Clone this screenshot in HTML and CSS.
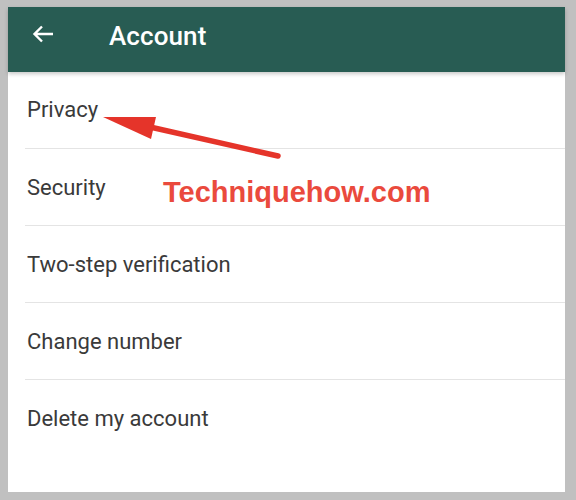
FILE: index.html
```html
<!DOCTYPE html>
<html>
<head>
<meta charset="utf-8">
<link rel="stylesheet" href="styles.css">
</head>
<body>
<div class="screen">
  <header class="appbar">
    <svg class="back" width="22" height="18" viewBox="0 0 22 18"><path d="M21 9H3M10 1.5L2.5 9L10 16.5" fill="none" stroke="#fff" stroke-width="2.4"/></svg>
    <h1 class="title">Account</h1>
  </header>
  <ul class="list">
    <li class="item">Privacy</li>
    <li class="item">Security</li>
    <li class="item">Two-step verification</li>
    <li class="item">Change number</li>
    <li class="item last">Delete my account</li>
  </ul>
  <div class="watermark">Techniquehow.com</div>
  <svg class="pointer" width="576" height="500" viewBox="0 0 576 500">
    <path d="M278 156L150 127" stroke="#e5342a" stroke-width="5.5" stroke-linecap="round" fill="none"/>
    <path d="M103 117L156 117L151 139Z" fill="#e5342a"/>
  </svg>
</div>
</body>
</html>
```
FILE: styles.css
```css
html, body {
  margin: 0;
  padding: 0;
  background: #c0c0c0;
}
body {
  width: 576px;
  height: 500px;
  overflow: hidden;
}
.screen {
  margin: 7px 11px 0 8px;
  height: 485px;
  background: #fff;
  display: flex;
  flex-direction: column;
}
.appbar {
  height: 65px;
  flex: 0 0 65px;
  background: #285c53;
  display: flex;
  align-items: center;
  box-shadow: 0 2px 4px rgba(0,0,0,0.22);
  position: relative;
  z-index: 1;
}
.back {
  margin-left: 24px;
  margin-top: -12px;
}
.title {
  margin: -8px 0 0 55px;
  font-family: Roboto, "Noto Sans", sans-serif;
  font-weight: 500;
  font-size: 26px;
  color: #fff;
  letter-spacing: 0.1px;
}
.list {
  list-style: none;
  margin: 0;
  padding: 0;
}
.item {
  height: 76px;
  border-bottom: 1px solid #e4e4e4;
  margin-left: 17px;
  padding-left: 2px;
  display: flex;
  align-items: center;
  font-family: Roboto, "Noto Sans", sans-serif;
  font-size: 22px;
  color: #3a3a3a;
}
.item:first-child {
  padding-bottom: 2px;
  height: 74px;
}
.item.last {
  border-bottom: none;
}
.watermark {
  position: absolute;
  left: 163px;
  top: 176px;
  font-family: "Liberation Sans", Arial, sans-serif;
  font-weight: bold;
  font-size: 29px;
  color: #ea4a3d;
}
.pointer {
  position: absolute;
  left: 0;
  top: 0;
}
```
